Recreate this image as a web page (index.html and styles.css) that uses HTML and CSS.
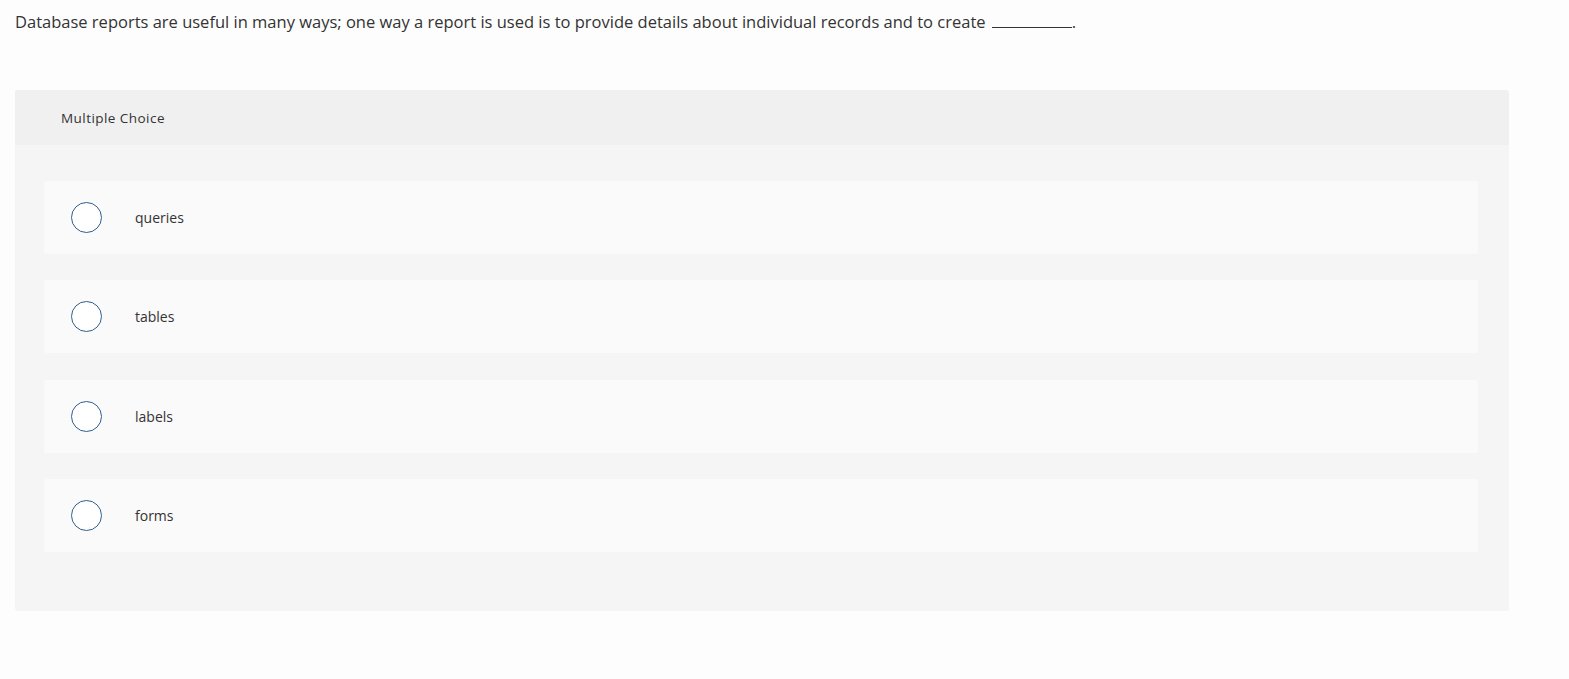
FILE: index.html
```html
<!DOCTYPE html>
<html>
<head>
<meta charset="utf-8">
<link rel="stylesheet" href="styles.css">
</head>
<body>
<div class="page">
  <p class="question">Database reports are useful in many ways; one way a report is used is to provide details about individual records and to create <span class="blank"></span>.</p>
  <div class="panel">
    <div class="panel-head">Multiple Choice</div>
    <div class="options">
      <div class="option"><span class="radio"></span><span class="label">queries</span></div>
      <div class="option"><span class="radio"></span><span class="label">tables</span></div>
      <div class="option"><span class="radio"></span><span class="label">labels</span></div>
      <div class="option"><span class="radio"></span><span class="label">forms</span></div>
    </div>
  </div>
</div>
</body>
</html>
```
FILE: styles.css
```css
html, body {
  margin: 0;
  padding: 0;
  background: #fdfdfd;
}
body {
  font-family: "Open Sans", "Lato", sans-serif;
  color: #333;
}
.page {
  padding: 11px 60px 0 15px;
}
.question {
  margin: 0;
  font-size: 16.5px;
  line-height: 22px;
  color: #333;
}
.blank {
  display: inline-block;
  width: 80px;
  border-bottom: 1px solid #333;
  margin-left: 2px;
  vertical-align: baseline;
}
.panel {
  margin-top: 57px;
  background: #f5f5f5;
  border-radius: 3px;
  overflow: hidden;
}
.panel-head {
  height: 55px;
  background: #f0f0f0;
  display: flex;
  align-items: center;
  padding-left: 46px;
  font-size: 13.5px;
  letter-spacing: 0.45px;
  color: #333;
}
.options {
  padding: 36px 31px 59px 29px;
  display: flex;
  flex-direction: column;
  gap: 26.3px;
}
.option {
  height: 73px;
  background: #fafafa;
  border-radius: 3px;
  display: flex;
  align-items: center;
  padding-left: 27px;
}
.radio {
  width: 29px;
  height: 29px;
  border: 1.2px solid #2f5e91;
  border-radius: 50%;
  background: #fff;
  flex: none;
}
.label {
  margin-left: 33px;
  font-size: 14px;
  color: #333;
}
```
